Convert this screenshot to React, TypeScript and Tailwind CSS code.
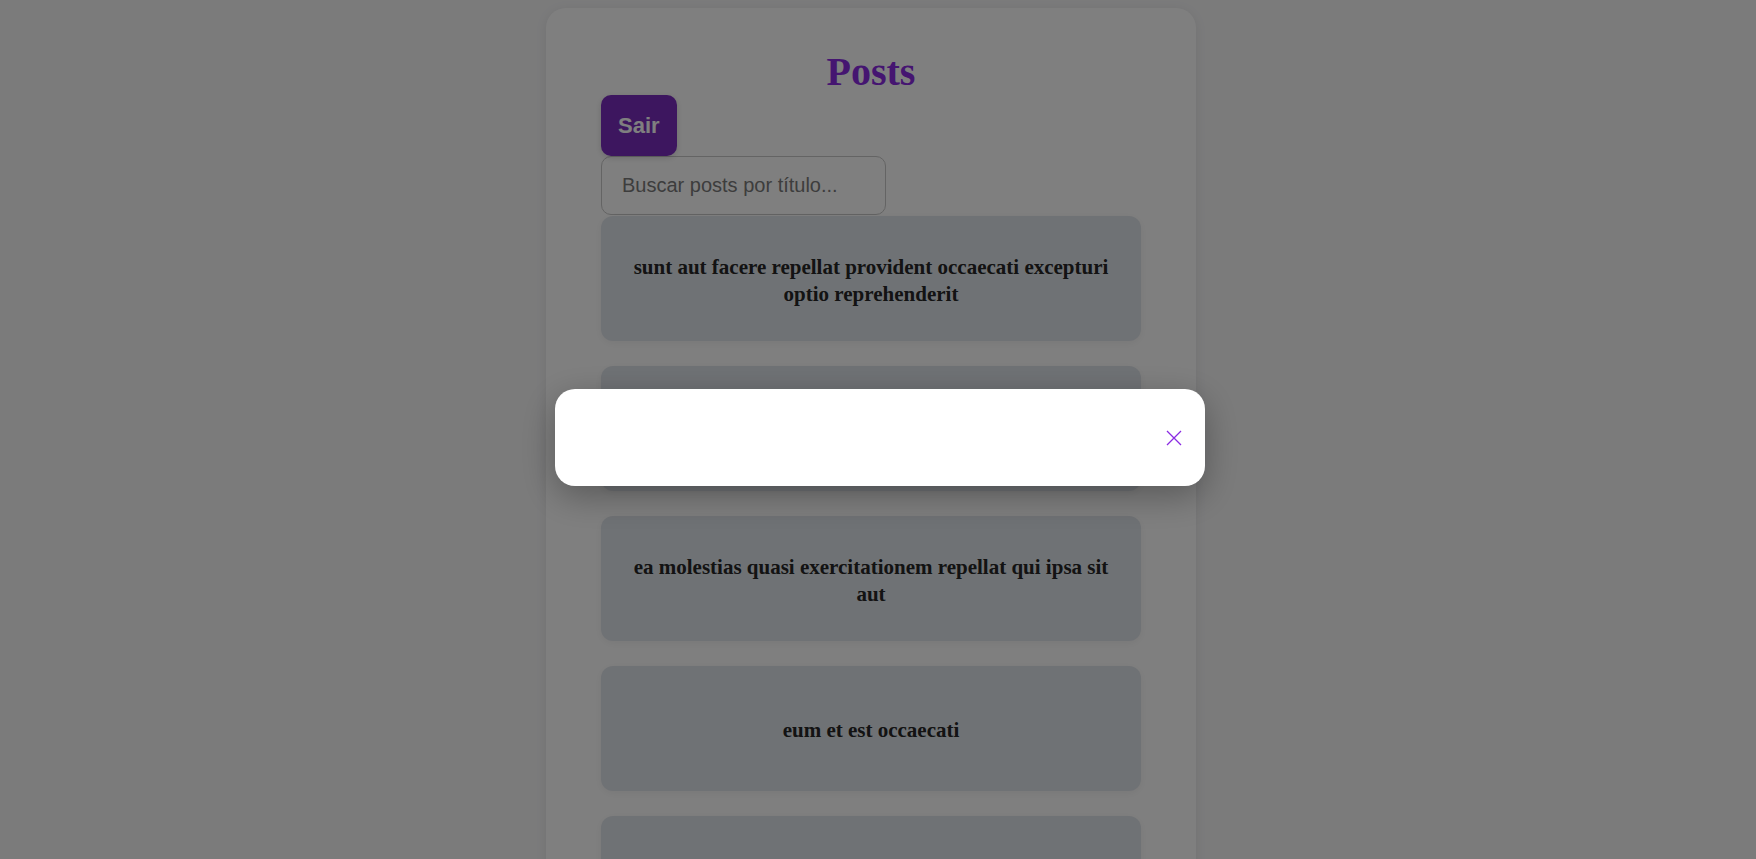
import { useState } from 'react'

const posts = [
  'sunt aut facere repellat provident occaecati excepturi optio reprehenderit',
  'qui est esse',
  'ea molestias quasi exercitationem repellat qui ipsa sit aut',
  'eum et est occaecati',
  'nesciunt quas odio',
]

const serif = "font-['Liberation_Serif','Times_New_Roman',serif]"

export default function App() {
  const [open, setOpen] = useState(true)

  return (
    <div className="min-h-screen bg-[#f6f6f7] pt-[8px] pr-[14px] flex justify-center">
      <div className="w-[650px] bg-white rounded-[20px] px-[55px] pt-[41px] pb-[40px] shadow-[0_2px_12px_rgba(0,0,0,0.08)]">
        <h1 className={`${serif} text-center text-[40px] leading-[46px] font-bold text-[#8a2be2]`}>
          Posts
        </h1>
        <button className="h-[61px] px-[17px] rounded-[10px] bg-[#7b2cbf] text-white text-[22px] font-bold font-['Liberation_Sans',Arial,sans-serif] shadow-[0_2px_6px_rgba(0,0,0,0.15)]">
          Sair
        </button>
        <input
          type="text"
          placeholder="Buscar posts por título..."
          className="block w-[285px] h-[59px] border border-[#c8c8c8] rounded-[10px] px-[20px] text-[20px] font-['Liberation_Sans',Arial,sans-serif] placeholder:text-[#7a7a7a] outline-none"
        />
        <div className="flex flex-col gap-[25px] mt-[1px]">
          {posts.map((title) => (
            <div
              key={title}
              className="h-[125px] rounded-[12px] bg-[#dfe4ea] px-[29px] pt-[4px] flex items-center justify-center text-center shadow-[0_2px_8px_rgba(0,0,0,0.06)]"
            >
              <h3 className={`${serif} text-[21px] leading-[27px] font-bold text-[#262626]`}>{title}</h3>
            </div>
          ))}
        </div>
      </div>

      {open && (
        <div className="fixed inset-0 bg-black/50 flex justify-center pt-[389px] pl-[4px]">
          <div className="w-[650px] h-[97px] bg-white rounded-[20px] shadow-[0_10px_35px_rgba(0,0,0,0.3)] flex items-center justify-end pr-[23px]">
            <button onClick={() => setOpen(false)} className="w-[16px] h-[16px] flex items-center justify-center">
              <svg width="16" height="16" viewBox="0 0 16 16" fill="none" stroke="#8a2be2" strokeWidth="1.3">
                <path d="M1 1L15 15M15 1L1 15" />
              </svg>
            </button>
          </div>
        </div>
      )}
    </div>
  )
}
